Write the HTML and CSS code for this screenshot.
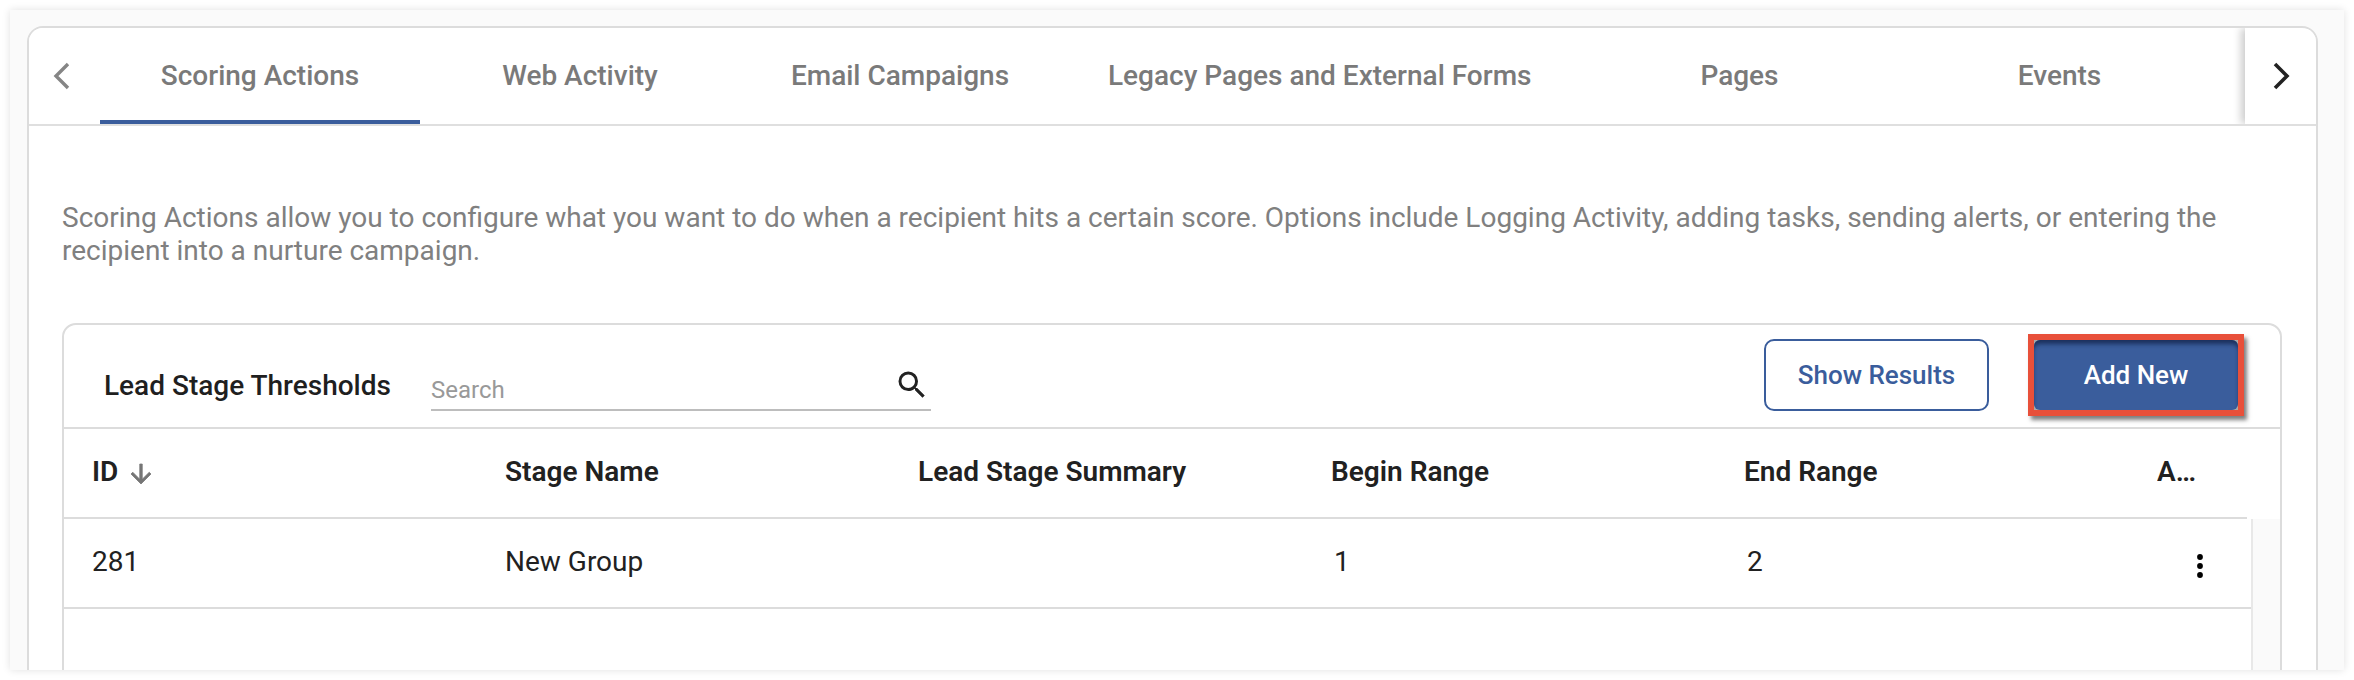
FILE: index.html
```html
<!DOCTYPE html>
<html lang="en">
<head>
<meta charset="utf-8">
<title>Scoring Actions</title>
<link rel="stylesheet" href="styles.css">
</head>
<body>
<main class="panel">
  <section class="card">
    <nav class="tabbar">
      <div class="scroller scroller-left">
        <svg class="chev" viewBox="0 0 18 28" width="18" height="28"><path d="M15 2 L3 14 L15 26" fill="none" stroke="#858585" stroke-width="3.4"/></svg>
      </div>
      <div class="tabs">
        <div class="tab active">Scoring Actions</div>
        <div class="tab">Web Activity</div>
        <div class="tab">Email Campaigns</div>
        <div class="tab">Legacy Pages and External Forms</div>
        <div class="tab">Pages</div>
        <div class="tab">Events</div>
      </div>
      <div class="scroller scroller-right">
        <svg class="chev" viewBox="0 0 18 28" width="18" height="28"><path d="M3 2 L15 14 L3 26" fill="none" stroke="#222" stroke-width="3.6"/></svg>
      </div>
    </nav>
    <div class="content">
      <p class="desc">Scoring Actions allow you to configure what you want to do when a recipient hits a certain score. Options include Logging Activity, adding tasks, sending alerts, or entering the recipient into a nurture campaign.</p>
      <section class="table-card">
        <header class="toolbar">
          <h2 class="title">Lead Stage Thresholds</h2>
          <div class="search">
            <span class="search-label">Search</span>
            <svg class="search-icon" viewBox="0 0 24 24" width="36" height="36"><path fill="#222" d="M15.5 14h-.79l-.28-.27A6.47 6.47 0 0 0 16 9.5 6.5 6.5 0 1 0 9.5 16c1.61 0 3.09-.59 4.23-1.57l.27.28v.79l5 4.99L20.49 19l-4.99-5zm-6 0C7.01 14 5 11.99 5 9.5S7.01 5 9.5 5 14 7.01 14 9.5 11.99 14 9.5 14z"/></svg>
          </div>
          <div class="actions">
            <button class="btn btn-outline">Show Results</button>
            <span class="highlight"><button class="btn btn-primary">Add New</button></span>
          </div>
        </header>
        <div class="grid-wrap">
          <div class="row head">
            <div class="cell">ID <svg class="sort" viewBox="0 0 24 24" width="30" height="30"><path fill="#757575" stroke="#757575" stroke-width=".6" d="M20 12l-1.41-1.41L13 16.17V4h-2v12.17l-5.58-5.59L4 12l8 8 8-8z"/></svg></div>
            <div class="cell">Stage Name</div>
            <div class="cell">Lead Stage Summary</div>
            <div class="cell">Begin Range</div>
            <div class="cell">End Range</div>
            <div class="cell trunc">Actions</div>
          </div>
          <div class="body-wrap">
            <div class="rows">
              <div class="row data">
                <div class="cell">281</div>
                <div class="cell">New Group</div>
                <div class="cell"></div>
                <div class="cell num">1</div>
                <div class="cell num">2</div>
                <div class="cell kebab"><svg viewBox="0 0 8 26" width="8" height="26"><circle cx="4" cy="4" r="2.9"/><circle cx="4" cy="13" r="2.9"/><circle cx="4" cy="22" r="2.9"/></svg></div>
              </div>
            </div>
            <div class="scrolltrack"></div>
          </div>
        </div>
      </section>
    </div>
  </section>
</main>
</body>
</html>
```
FILE: styles.css
```css
* { box-sizing: border-box; }
html, body { margin: 0; height: 680px; overflow: hidden; background: #fff; }
body { padding: 10px; font-family: Roboto, "Liberation Sans", sans-serif; }

.panel {
  width: 2334px;
  height: 660px;
  padding: 16px 26px 0 17px;
  background: #fafafa;
  box-shadow: 0 0 8px rgba(0,0,0,.12);
  overflow: hidden;
}
.card {
  height: 700px;
  background: #fff;
  border: 2px solid #dcdcdc;
  border-radius: 16px 16px 0 0;
  overflow: hidden;
}
.tabbar {
  display: flex;
  height: 98px;
  border-bottom: 2px solid #dfdfdf;
  overflow: hidden;
}
.scroller {
  flex: 0 0 71px;
  display: flex;
  align-items: center;
  justify-content: center;
  background: #fff;
}
.scroller-left { padding-right: 6px; }
.scroller-right { box-shadow: -4px 0 8px rgba(0,0,0,.2); position: relative; }
.tabs { flex: 1; display: flex; min-width: 0; }
.tab {
  flex: 0 0 auto;
  min-width: 320px;
  padding: 0 48px 2px;
  display: flex;
  align-items: center;
  justify-content: center;
  font-size: 28px;
  font-weight: 500;
  color: #7a7a7a;
  border-bottom: 4px solid transparent;
  border-top: 4px solid transparent;
}
.tab.active { border-bottom-color: #3a5d9c; }

.content { padding: 75px 33px 0 33px; }
.desc {
  margin: 0 0 56px;
  font-size: 28px;
  line-height: 33px;
  color: #808080;
}
.table-card {
  width: 2220px;
  height: 400px;
  border: 2px solid #dcdcdc;
  border-radius: 14px 14px 0 0;
  overflow: hidden;
}
.toolbar {
  display: flex;
  align-items: center;
  height: 104px;
  padding-left: 40px;
  border-bottom: 2px solid #dcdcdc;
}
.title {
  margin: 0;
  padding-top: 18px;
  width: 327px;
  font-size: 28px;
  font-weight: 500;
  color: #1f1f1f;
}
.search {
  position: relative;
  width: 500px;
  height: 62px;
  margin-top: 7px;
  display: flex;
  align-items: center;
  justify-content: space-between;
  padding: 0 1px 0 0;
  border-bottom: 2px solid #bdbdbd;
}
.search-label { font-size: 24px; color: #999; padding-top: 22px; }
.search-icon { margin-top: 12px; }
.actions { margin-left: auto; display: flex; align-items: center; gap: 39px; padding-right: 36px; margin-top: -2px; }
.btn {
  font-family: inherit;
  font-size: 26px;
  font-weight: 500;
  height: 72px;
  border-radius: 10px;
}
.btn-outline {
  width: 225px;
  background: #fff;
  color: #3a5d9c;
  border: 2px solid #3a5d9c;
}
.highlight {
  display: block;
  width: 216px;
  height: 82px;
  border: 6px solid #e8503a;
  background: #a9a9a9;
  box-shadow: 3px 4px 4px rgba(0,0,0,.5);
}
.btn-primary {
  display: block;
  width: 204px;
  height: 70px;
  background: #3a5d9c;
  color: #fff;
  border: 0;
  border-radius: 6px;
  box-shadow: inset 0 5px 4px -1px rgba(10,25,60,.65);
}
.row { display: grid; grid-template-columns: repeat(6, 413px); padding-left: 28px; align-items: center; }
.head {
  height: 90px;
  width: 2183px;
  padding-bottom: 3px;
  border-bottom: 2px solid #dcdcdc;
  font-size: 28px;
  font-weight: 600;
  color: #212121;
}
.head .cell { display: flex; align-items: center; gap: 8px; }
.sort { margin-top: 5px; }
.trunc { display: block !important; width: 46px; overflow: hidden; white-space: nowrap; text-overflow: ellipsis; }
.body-wrap { display: flex; height: 300px; }
.rows { width: 2187px; }
.data {
  height: 90px;
  padding-bottom: 3px;
  border-bottom: 2px solid #dcdcdc;
  font-size: 28px;
  color: #212121;
}
.num { padding-left: 3px; }
.kebab { padding-left: 39px; padding-top: 9px; line-height: 0; }
.scrolltrack {
  width: 30px;
  background: #fafafa;
  border-left: 2px solid #e8e8e8;
}
```
